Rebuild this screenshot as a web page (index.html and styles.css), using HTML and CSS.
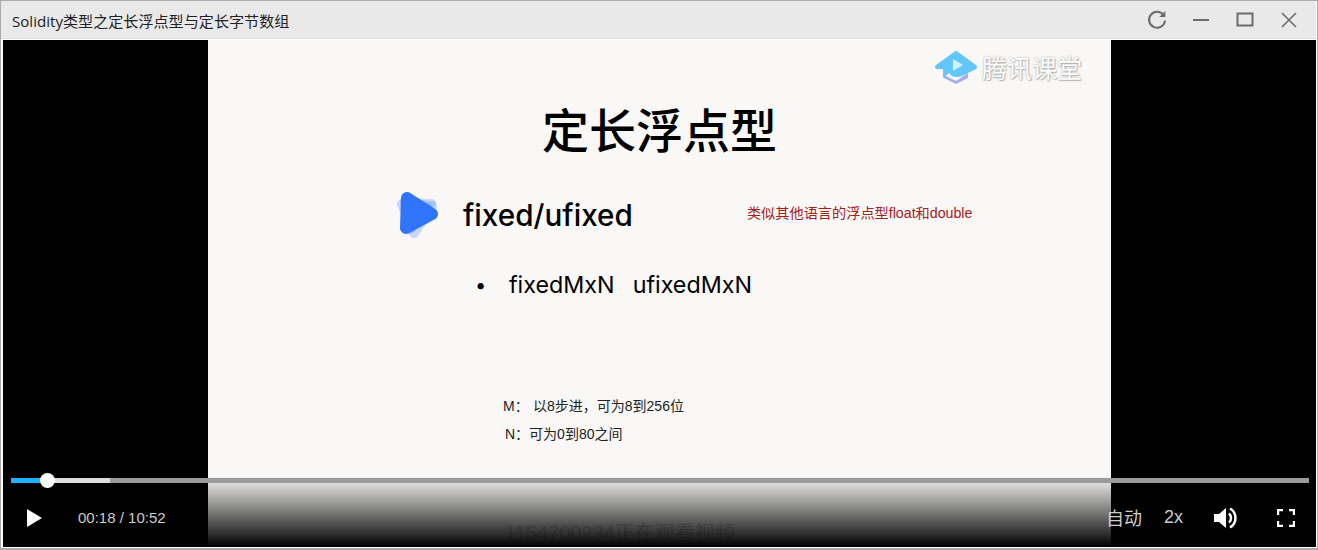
FILE: index.html
```html
<!DOCTYPE html>
<html lang="en">
<head>
    <meta charset="UTF-8">
    <title>Solidity类型之定长浮点型与定长字节数组</title>
    <link rel="stylesheet" href="styles.css">
</head>
<body>
    <div class="window">
        <div class="titlebar">
            <div class="title">Solidity类型之定长浮点型与定长字节数组</div>
            <div class="win-btns">
                <svg class="win-icon" viewBox="0 0 22 22"><path d="M17.6 6.2A8 8 0 1 0 19 11.5" fill="none" stroke="#6b6b6b" stroke-width="2"/><path d="M19.4 1.8v6.2h-6.2z" fill="#6b6b6b"/></svg>
                <svg class="win-icon" viewBox="0 0 22 22"><path d="M3 11h16" stroke="#6b6b6b" stroke-width="2"/></svg>
                <svg class="win-icon" viewBox="0 0 22 22"><path d="M3.5 4.5h15v12h-15z" fill="none" stroke="#6b6b6b" stroke-width="2"/></svg>
                <svg class="win-icon" viewBox="0 0 22 22"><path d="M4 4l14 14M18 4L4 18" stroke="#6b6b6b" stroke-width="1.6"/></svg>
            </div>
        </div>
        <div class="video">
            <div class="slide">
                <div class="brand">
                    <svg class="brand-logo" width="43" height="34" viewBox="0 0 43 34">
                        <path d="M9 24l12 6 12-8v5l-12 6-12-6z" fill="#a3adf7"/>
                        <path d="M21 0q1 0 2 1l18 13q2 2 0 4l-14 7q-5 2-10 0l-3-3-6 5v-9h-7q-2-2 0-4l18-13q1-1 2-1z" fill="#62c6fb"/>
                        <path d="M18 8l10 6-10 6z" fill="#d3f0ff"/>
                    </svg>
                    <span class="brand-name">腾讯课堂</span>
                </div>
                <h1 class="slide-title">定长浮点型</h1>
                <div class="type-row">
                    <svg class="play-logo" width="44" height="47" viewBox="0 0 44 47">
                        <polygon points="6,12 36,14 18,41" fill="#2f74fb" fill-opacity="0.25" stroke="#2f74fb" stroke-opacity="0.25" stroke-width="10" stroke-linejoin="round"/>
                        <polygon points="8,10 36,11 14,38" fill="#2f74fb" fill-opacity="0.2" stroke="#2f74fb" stroke-opacity="0.2" stroke-width="8" stroke-linejoin="round"/>
                        <polygon points="11,6 36,22 10,36" fill="#2f74fb" stroke="#2f74fb" stroke-width="12" stroke-linejoin="round"/>
                    </svg>
                    <span class="type-name">fixed/ufixed</span>
                    <span class="note">类似其他语言的浮点型float和double</span>
                </div>
                <div class="bullet">
                    <span class="dot">•</span>
                    <span>fixedMxN</span>
                    <span>ufixedMxN</span>
                </div>
                <div class="param param-m"><span class="param-key">M：</span>以8步进，可为8到256位</div>
                <div class="param param-n">N：可为0到80之间</div>
                <div class="viewer">1154700234正在观看视频</div>
            </div>
            <div class="controls">
                <div class="progress">
                    <div class="played"></div>
                    <div class="buffered"></div>
                    <div class="knob"></div>
                </div>
                <div class="ctrl-row">
                    <svg class="play-btn" width="16" height="20" viewBox="0 0 16 20"><path d="M1 1l15 9-15 9z" fill="#fff"/></svg>
                    <span class="time">00:18 / 10:52</span>
                    <span class="quality">自动</span>
                    <span class="speed">2x</span>
                    <svg class="volume" width="26" height="24" viewBox="0 0 26 24">
                        <path d="M1 8h5l7-6v20l-7-6H1z" fill="#fff"/>
                        <path d="M16 7.5a6 6 0 0 1 0 9" fill="none" stroke="#fff" stroke-width="2.5"/>
                        <path d="M17 2.5a11 11 0 0 1 0 19" fill="none" stroke="#fff" stroke-width="2.5"/>
                    </svg>
                    <svg class="fullscreen" width="18" height="18" viewBox="0 0 18 18"><path d="M1 6V1h5M12 1h5v5M17 12v5h-5M6 17H1v-5" fill="none" stroke="#fff" stroke-width="2.4"/></svg>
                </div>
            </div>
        </div>
    </div>
</body>
</html>
```
FILE: styles.css
```css
* {
    box-sizing: border-box;
}
html, body {
    margin: 0;
    height: 100%;
    overflow: hidden;
    background: #fff;
}
body {
    font-family: "Liberation Sans", "Noto Sans CJK SC", sans-serif;
}
.window {
    width: 1318px;
    height: 550px;
    display: flex;
    flex-direction: column;
    border: 1px solid #aaa;
    border-bottom-width: 2px;
    background: #fff;
}
.titlebar {
    height: 38px;
    flex: none;
    display: flex;
    align-items: center;
    justify-content: space-between;
    padding: 0 16px 0 11px;
    background: #e9e9e9;
    border-bottom: 1px solid #e0e0e0;
    margin: 0 1px 0 0;
}
.title {
    padding-top: 1px;
    font-size: 15.1px;
    color: #222;
    font-family: "Open Sans", "Noto Sans CJK SC", sans-serif;
}
.win-btns {
    display: flex;
    gap: 22px;
}
.win-icon {
    width: 22px;
    height: 22px;
}
.video {
    position: relative;
    flex: 1;
    margin: 1px 1px 1px 2px;
    background: #000;
    display: flex;
    justify-content: center;
}
.slide {
    position: relative;
    width: 903px;
    background: #f9f8f6;
    color: #000;
    overflow: hidden;
}
.brand {
    position: absolute;
    top: 9px;
    right: 29px;
    display: flex;
    align-items: center;
    gap: 4px;
}
.brand-name {
    margin-bottom: 2px;
    font-size: 25px;
    font-weight: 400;
    color: #fff;
    text-shadow: 0 0 2px #999, 1px 1px 1px #bbb;
}
.slide-title {
    margin: 0;
    padding-top: 56px;
    font-size: 47px;
    line-height: 64px;
    font-weight: 500;
    text-align: center;
    font-family: "Noto Sans CJK SC", sans-serif;
}
.type-row {
    display: flex;
    align-items: center;
    margin-top: 31px;
    padding-left: 188px;
    height: 48px;
}
.type-name {
    margin-left: 23px;
    font-size: 29.7px;
    font-weight: 500;
    font-family: Inter, "Liberation Sans", sans-serif;
}
.note {
    margin-left: 114px;
    margin-bottom: 6px;
    font-size: 14.2px;
    color: #a5211b;
}
.bullet {
    display: flex;
    margin-top: 29px;
    padding-left: 267px;
    font-size: 23.3px;
    line-height: 34px;
    font-family: Inter, "Liberation Sans", sans-serif;
}
.dot {
    width: 34px;
    font-size: 20px;
}
.bullet span + span + span {
    margin-left: 18px;
}
.param {
    font-size: 14px;
    line-height: 20px;
    color: #222;
}
.param-m {
    margin-top: 94px;
    padding-left: 295px;
}
.param-key {
    display: inline-block;
    width: 30px;
}
.param-n {
    margin-top: 8px;
    padding-left: 297px;
}
.viewer {
    position: absolute;
    left: 297px;
    bottom: 1px;
    font-size: 20px;
    color: #cfcfcf;
}
.controls {
    position: absolute;
    left: 0;
    right: 0;
    bottom: 0;
    height: 70px;
    background: linear-gradient(to bottom, rgba(0, 0, 0, 0.02), rgba(0, 0, 0, 1));
}
.progress {
    position: absolute;
    top: 1px;
    left: 8px;
    right: 7px;
    height: 5px;
    background: #9b9b9b;
}
.played {
    position: absolute;
    left: 0;
    top: 0;
    bottom: 0;
    width: 36px;
    background: #1fb0ff;
    z-index: 1;
}
.buffered {
    position: absolute;
    left: 0;
    top: 0;
    bottom: 0;
    width: 99px;
    background: #dcdcdc;
}
.knob {
    position: absolute;
    left: 29px;
    top: -5px;
    width: 15px;
    height: 15px;
    border-radius: 50%;
    background: #fff;
    z-index: 2;
}
.ctrl-row {
    position: absolute;
    left: 0;
    right: 0;
    bottom: 0;
    height: 58px;
    display: flex;
    align-items: center;
    padding: 0 21px 0 23px;
    color: #ccc;
    font-size: 15px;
}
.time {
    margin-left: 36px;
    margin-bottom: 2px;
}
.quality {
    margin-left: auto;
    margin-bottom: 2px;
    font-size: 18px;
}
.speed {
    margin-left: 22px;
    margin-bottom: 2px;
    font-size: 18px;
}
.volume {
    margin-left: 30px;
}
.fullscreen {
    margin-left: 38px;
}
```
